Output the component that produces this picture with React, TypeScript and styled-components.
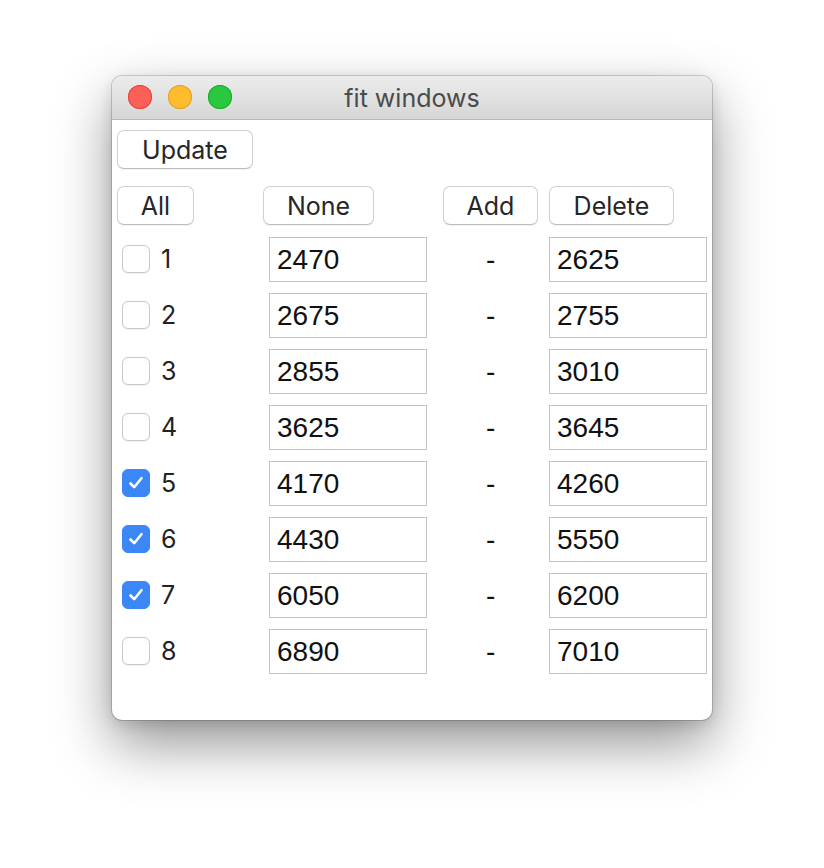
import React from "react";
import styled, { createGlobalStyle } from "styled-components";

const Global = createGlobalStyle`
  html, body { margin: 0; padding: 0; background: #ffffff; }
  body { font-family: "Liberation Sans", Arial, sans-serif; }
`;

const Page = styled.div`
  width: 824px;
  height: 868px;
  padding: 76px 0 0 112px;
  box-sizing: border-box;
  background: #ffffff;
  overflow: hidden;
`;

const Window = styled.div`
  width: 600px;
  height: 644px;
  border-radius: 10px;
  background: #ffffff;
  box-shadow: 0 0 0 1px rgba(0, 0, 0, 0.16), 0 24px 56px rgba(0, 0, 0, 0.42),
    0 4px 14px rgba(0, 0, 0, 0.12);
  display: flex;
  flex-direction: column;
  overflow: hidden;
`;

const TitleBar = styled.div`
  height: 43px;
  flex: none;
  display: flex;
  align-items: center;
  padding-left: 16px;
  background: linear-gradient(#ececec, #d6d6d6);
  border-bottom: 1px solid #b9b9b9;
  position: relative;
`;

const Lights = styled.div`
  display: flex;
  gap: 16px;
  margin-top: -1px;
`;

const Light = styled.span<{ $c: string; $b: string }>`
  width: 24px;
  height: 24px;
  border-radius: 50%;
  background: ${(p) => p.$c};
  box-shadow: inset 0 0 0 1px ${(p) => p.$b};
`;

const Title = styled.div`
  position: absolute;
  left: 0;
  right: 0;
  top: 0;
  bottom: 0;
  display: flex;
  align-items: center;
  justify-content: center;
  font-family: "Inter", "Liberation Sans", sans-serif;
  font-size: 25px;
  color: #4b4b4b;
  pointer-events: none;
  padding-top: 1px;
`;

const Content = styled.div`
  padding: 10px 0 0 5px;
  display: flex;
  flex-direction: column;
`;

const Button = styled.button<{ $w: number }>`
  width: ${(p) => p.$w}px;
  height: 39px;
  box-sizing: border-box;
  background: #ffffff;
  border: 1px solid #d0d0d0;
  border-bottom-color: #bdbdbd;
  border-radius: 7px;
  box-shadow: 0 1px 1px rgba(0, 0, 0, 0.06);
  font-family: "Inter", "Liberation Sans", sans-serif;
  font-size: 25px;
  color: #262626;
  padding: 0;
  display: flex;
  align-items: center;
  justify-content: center;
`;

const Grid = styled.div`
  display: grid;
  grid-template-columns: 146px 180px 106px 163px;
  grid-auto-rows: 56px;
  align-items: center;
  margin-top: 12px;
`;

const ButtonRow = styled.div`
  display: grid;
  grid-template-columns: 146px 180px 106px 163px;
  margin-top: 17px;
  margin-bottom: -6px;
`;

const CheckCell = styled.label`
  display: flex;
  align-items: center;
  gap: 11px;
  padding-left: 5px;
  font-family: "Inter", "Liberation Sans", sans-serif;
  font-size: 25px;
  color: #222;
`;

const Box = styled.span<{ $on: boolean }>`
  width: 28px;
  height: 28px;
  box-sizing: border-box;
  border-radius: 6px;
  display: flex;
  align-items: center;
  justify-content: center;
  background: ${(p) => (p.$on ? "#3b87f6" : "#ffffff")};
  border: 1px solid ${(p) => (p.$on ? "#3b87f6" : "#c9c9c9")};
  box-shadow: ${(p) => (p.$on ? "none" : "0 1px 1px rgba(0,0,0,0.06)")};
`;

const Field = styled.div<{ $ml: number }>`
  width: 158px;
  height: 45px;
  margin-left: ${(p) => p.$ml}px;
  box-sizing: border-box;
  border: 1px solid #c2c2c2;
  background: #fff;
  font-family: "Liberation Sans", Arial, sans-serif;
  font-size: 28px;
  color: #111;
  display: flex;
  align-items: center;
  padding: 2px 0 0 7px;
`;

const Dash = styled.div`
  font-family: "Liberation Sans", Arial, sans-serif;
  font-size: 28px;
  color: #111;
  padding-left: 43px;
  padding-top: 2px;
`;

const rows: [number, boolean, string, string][] = [
  [1, false, "2470", "2625"],
  [2, false, "2675", "2755"],
  [3, false, "2855", "3010"],
  [4, false, "3625", "3645"],
  [5, true, "4170", "4260"],
  [6, true, "4430", "5550"],
  [7, true, "6050", "6200"],
  [8, false, "6890", "7010"],
];

export default function App() {
  return (
    <Page>
      <Global />
      <Window>
        <TitleBar>
          <Lights>
            <Light $c="#fe5f57" $b="#e0443e" />
            <Light $c="#febc2e" $b="#dea123" />
            <Light $c="#29c840" $b="#1aab29" />
          </Lights>
          <Title>fit windows</Title>
        </TitleBar>
        <Content>
          <Button $w={136}>Update</Button>
          <ButtonRow>
            <Button $w={77}>All</Button>
            <Button $w={111}>None</Button>
            <Button $w={95}>Add</Button>
            <Button $w={125}>Delete</Button>
          </ButtonRow>
          <Grid>
            {rows.map(([n, on, a, b]) => (
              <React.Fragment key={n}>
                <CheckCell>
                  <Box $on={on}>
                    {on && (
                      <svg width="18" height="18" viewBox="0 0 18 18">
                        <path
                          d="M3.5 9.5 L7.2 13.2 L14.5 4.2"
                          fill="none"
                          stroke="#fff"
                          strokeWidth="2.6"
                          strokeLinecap="round"
                          strokeLinejoin="round"
                        />
                      </svg>
                    )}
                  </Box>
                  {n}
                </CheckCell>
                <Field $ml={6}>{a}</Field>
                <Dash>-</Dash>
                <Field $ml={0}>{b}</Field>
              </React.Fragment>
            ))}
          </Grid>
        </Content>
      </Window>
    </Page>
  );
}
